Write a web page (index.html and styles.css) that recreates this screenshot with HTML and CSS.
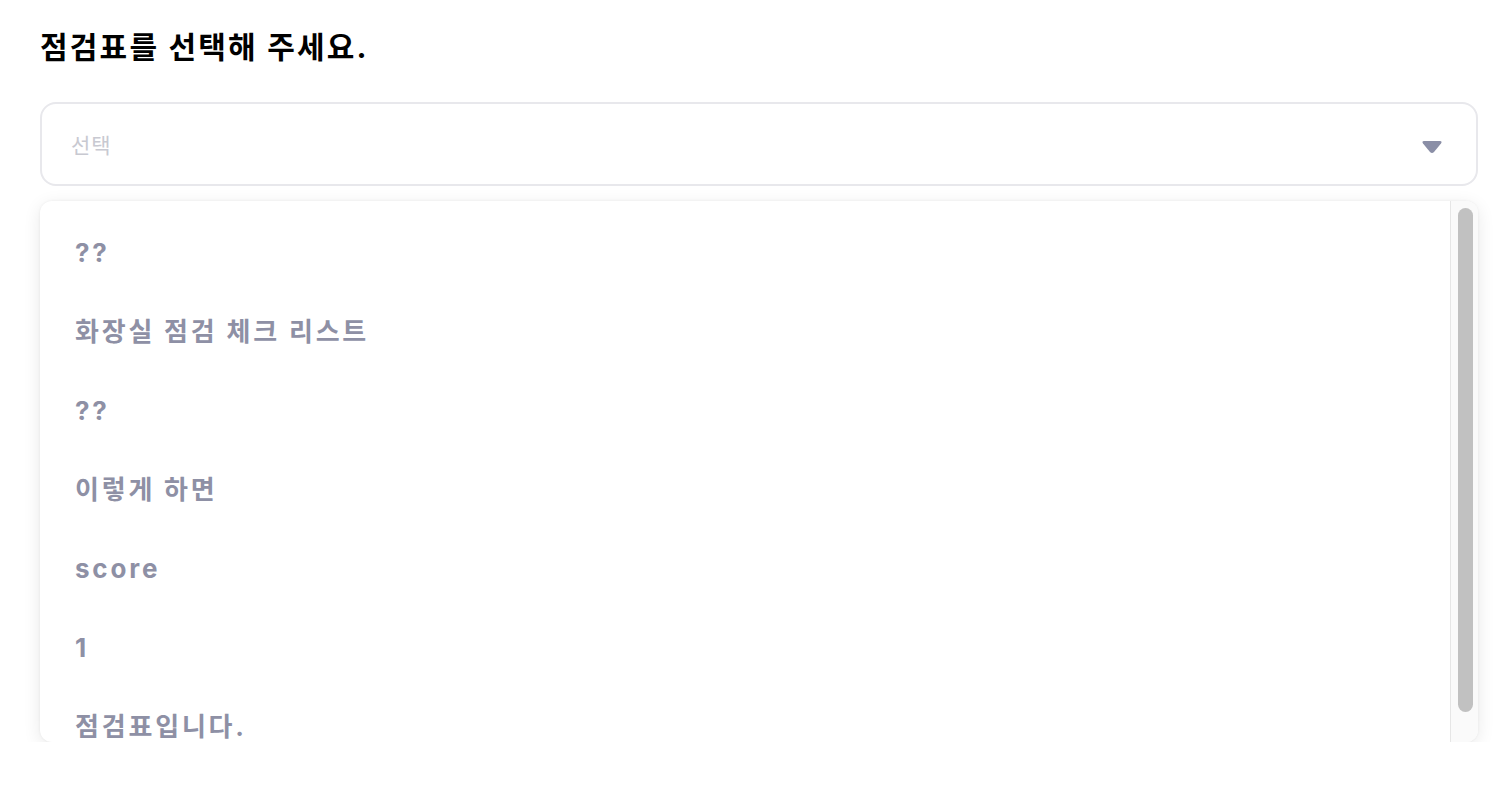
FILE: index.html
```html
<!DOCTYPE html>
<html lang="ko">
<head>
<meta charset="utf-8">
<link rel="stylesheet" href="styles.css">
</head>
<body>
<div class="page">
  <h1 class="title">점검표를 선택해 주세요.</h1>
  <div class="select">
    <span class="placeholder">선택</span>
    <svg class="caret" width="22" height="16" viewBox="0 0 22 16"><path d="M3 2 H19 Q21.5 2 20 4.5 L13 13 Q11 15.2 9 13 L2 4.5 Q0.5 2 3 2 Z" fill="#8a8ea6"/></svg>
  </div>
  <div class="menu">
    <ul class="list">
      <li class="item">??</li>
      <li class="item">화장실 점검 체크 리스트</li>
      <li class="item">??</li>
      <li class="item">이렇게 하면</li>
      <li class="item">score</li>
      <li class="item">1</li>
      <li class="item">점검표입니다.</li>
    </ul>
    <div class="track"><div class="thumb"></div></div>
  </div>
</div>
</body>
</html>
```
FILE: styles.css
```css
html, body { margin: 0; padding: 0; background: #fff; }
body { font-family: "Inter", "Noto Sans CJK KR", sans-serif; }
.page { padding: 27px 32px 0 40px; }
.title { margin: 0; font-size: 30px; line-height: 40px; font-weight: 700; color: #000; letter-spacing: 2.2px; }
.select {
  margin-top: 35px;
  height: 80px;
  border: 2px solid #e8e8ec;
  border-radius: 16px;
  display: flex;
  align-items: center;
  justify-content: space-between;
  padding: 0 33px 0 29px;
}
.placeholder { font-size: 21px; color: #c8c9d1; font-weight: 400; letter-spacing: 1px; }
.caret { display: block; margin-top: 6px; }
.menu {
  margin-top: 15px;
  height: 541px;
  border-radius: 12px;
  box-shadow: 0 4px 18px rgba(0,0,0,0.09), 0 0 3px rgba(0,0,0,0.06);
  overflow: hidden;
  display: flex;
  background: #fff;
}
.list { list-style: none; margin: 0; padding: 12px 0 0 35px; flex: 1; overflow: hidden; }
.item { height: 79px; line-height: 79px; font-size: 26px; font-weight: 700; color: #8e90a5; white-space: nowrap; letter-spacing: 2.8px; }
.track { width: 28px; background: #fafafa; border-left: 1px solid #e6e6e6; padding: 7px 0 0 7px; box-sizing: border-box; }
.thumb { width: 15px; height: 504px; border-radius: 8px; background: #c1c1c1; }
```
